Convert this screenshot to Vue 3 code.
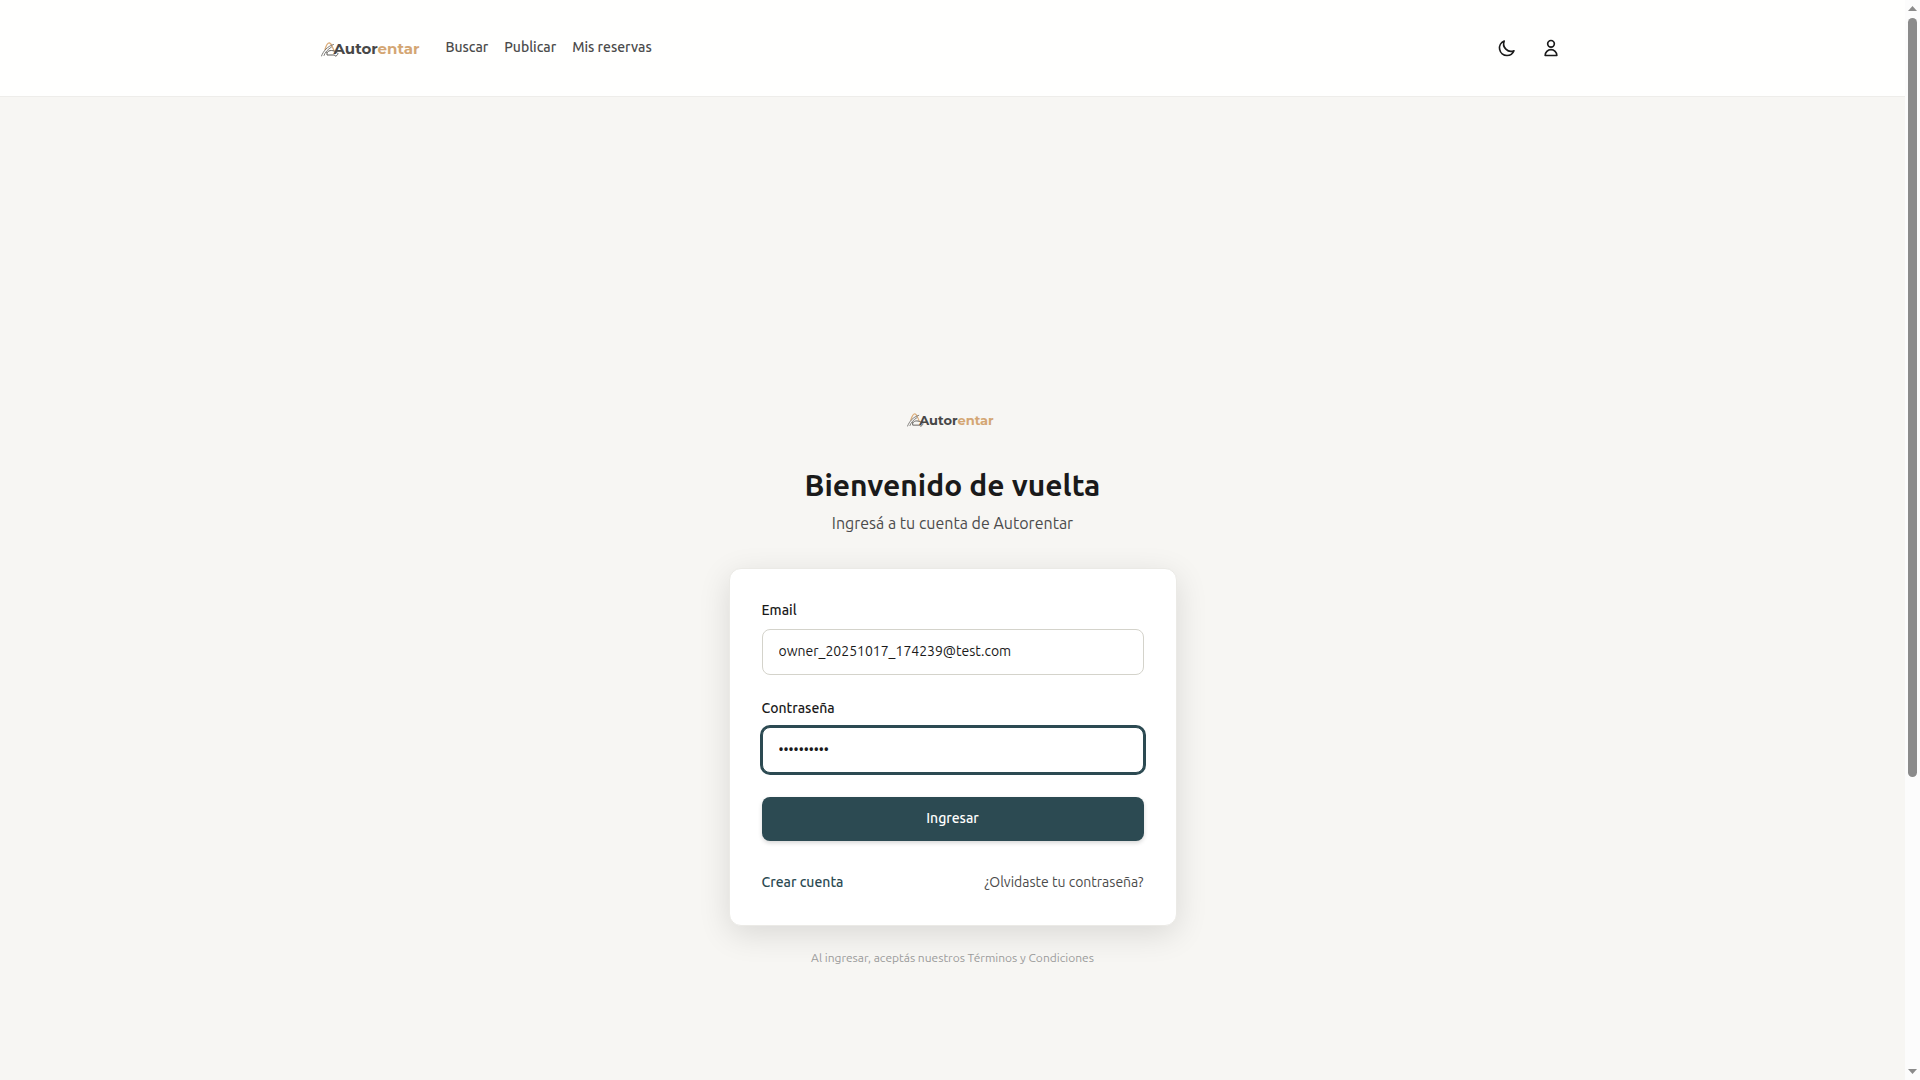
<script setup>
import { ref } from 'vue'

const email = ref('owner_20251017_174239@test.com')
const password = ref('autos12345')
const links = ['Buscar', 'Publicar', 'Mis reservas']
</script>

<template>
  <div class="window">
    <div class="page">
      <header class="header">
        <div class="header-inner">
          <a class="logo large" href="#" aria-label="Autorentar">
            <svg class="mark" viewBox="0 0 36 30" fill="none" stroke-linecap="round" aria-hidden="true">
              <path d="M8 15C11 5 13 1 17 2C21 3 22 9 26 17" stroke="#dcae7c" stroke-width="2.600" />
              <path d="M1 28C5 18 12 9 25 5M6 27C8 21 13 15 21 10" stroke="#5c5a57" stroke-width="1.600" />
              <path d="M12 21C16 15 25 16 32 21M12 21V26H27C28 30 33 28 34 23" stroke="#5c5a57" stroke-width="2" />
            </svg>
            <span class="word">Autor<span class="accent">entar</span></span>
          </a>
          <nav class="nav">
            <a v-for="link in links" :key="link" href="#">{{ link }}</a>
          </nav>
          <div class="actions">
            <button type="button" class="icon-button" aria-label="Cambiar tema">
              <svg viewBox="0 0 24 24" class="icon"><path d="M20.354 15.354A9 9 0 018.646 3.646 9.003 9.003 0 0012 21a9.003 9.003 0 008.354-5.646z" /></svg>
            </button>
            <button type="button" class="icon-button" aria-label="Perfil">
              <svg viewBox="0 0 24 24" class="icon"><path d="M16 7a4 4 0 11-8 0 4 4 0 018 0zM12 14a7 7 0 00-7 7h14a7 7 0 00-7-7z" /></svg>
            </button>
          </div>
        </div>
      </header>

      <main class="main">
        <div class="login">
          <div class="logo small">
            <svg class="mark" viewBox="0 0 36 30" fill="none" stroke-linecap="round" aria-hidden="true">
              <path d="M8 15C11 5 13 1 17 2C21 3 22 9 26 17" stroke="#dcae7c" stroke-width="2.600" />
              <path d="M1 28C5 18 12 9 25 5M6 27C8 21 13 15 21 10" stroke="#5c5a57" stroke-width="1.600" />
              <path d="M12 21C16 15 25 16 32 21M12 21V26H27C28 30 33 28 34 23" stroke="#5c5a57" stroke-width="2" />
            </svg>
            <span class="word">Autor<span class="accent">entar</span></span>
          </div>
          <h1>Bienvenido de vuelta</h1>
          <p class="subtitle">Ingresá a tu cuenta de Autorentar</p>

          <form class="card" @submit.prevent>
            <div class="field">
              <label for="email">Email</label>
              <input id="email" v-model="email" type="email" autocomplete="off" />
            </div>
            <div class="field">
              <label for="password">Contraseña</label>
              <input id="password" v-model="password" class="focused" type="password" autocomplete="off" />
            </div>
            <button type="submit" class="submit">Ingresar</button>
            <div class="card-links">
              <a href="#" class="create">Crear cuenta</a>
              <a href="#" class="forgot">¿Olvidaste tu contraseña?</a>
            </div>
          </form>

          <p class="terms">Al ingresar, aceptás nuestros Términos y Condiciones</p>
        </div>
      </main>
    </div>

    <div class="scrollbar" aria-hidden="true">
      <svg class="arrow" viewBox="0 0 9 5"><path d="M4.500 0L9 5H0z" /></svg>
      <div class="track"><div class="thumb"></div></div>
      <svg class="arrow" viewBox="0 0 9 5"><path d="M0 0H9L4.500 5z" /></svg>
    </div>
  </div>
</template>

<style>
body {
  margin: 0;
  background: #f7f6f3;
}
</style>

<style scoped>
* {
  box-sizing: border-box;
}
.window {
  display: flex;
  height: 100vh;
  overflow: hidden;
  font-family: Ubuntu, "Noto Sans", "Open Sans", sans-serif;
  font-size: 14px;
  line-height: 20px;
  color: #1a1a1a;
}
.page {
  flex: 1;
  min-width: 0;
  background: #f7f6f3;
}
a {
  text-decoration: none;
}
.header {
  background: #fffffe;
  border-bottom: 1px solid #eeedea;
}
.header-inner {
  display: flex;
  align-items: center;
  max-width: 1280px;
  height: 96px;
  margin: 0 auto;
  padding: 0 22px 0 8px;
}
.logo {
  display: flex;
  align-items: center;
  font-family: Montserrat, Inter, sans-serif;
  font-weight: 700;
  color: #474747;
}
.large {
  padding-top: 2px;
  font-size: 15px;
}
.mark {
  width: 18px;
  height: 15px;
  margin-right: -5px;
}
.accent {
  color: #d4a673;
}
.nav {
  display: flex;
  gap: 16px;
  margin-left: 26px;
  padding-bottom: 2px;
}
.nav a {
  font-weight: 500;
  color: #4b4b4b;
}
.actions {
  display: flex;
  gap: 4px;
  margin-left: auto;
}
.icon-button {
  display: flex;
  align-items: center;
  justify-content: center;
  width: 40px;
  height: 40px;
  padding: 0;
  border: 0;
  background: none;
}
.icon {
  width: 20px;
  height: 20px;
  fill: none;
  stroke: #1a1a1a;
  stroke-width: 2;
  stroke-linecap: round;
  stroke-linejoin: round;
}
.main {
  display: flex;
  justify-content: center;
  padding: 304px 16px 0;
}
.login {
  display: flex;
  flex-direction: column;
  align-items: center;
  width: 100%;
  max-width: 448px;
}
.small {
  height: 40px;
  margin-bottom: 26px;
  padding: 0 4px 2px 0;
  font-size: 13px;
}
.small .mark {
  width: 17px;
  height: 14px;
}
h1 {
  margin: 0 0 8px;
  font-size: 30px;
  font-weight: 600;
  line-height: 36px;
}
.subtitle {
  margin: 0 0 33px;
  font-size: 16px;
  line-height: 24px;
  color: #4b4b4b;
}
.card {
  width: 100%;
  display: flex;
  flex-direction: column;
  gap: 24px;
  padding: 32px;
  border: 1px solid #ebeae6;
  border-radius: 12px;
  background: #fff;
  box-shadow: 0 8px 32px rgba(0, 0, 0, 0.12);
}
.field {
  display: flex;
  flex-direction: column;
  gap: 10px;
}
label {
  font-weight: 500;
  line-height: 18px;
}
input {
  width: 100%;
  height: 46px;
  padding: 0 16px 2px;
  border: 1px solid #d4d3cb;
  border-radius: 8px;
  outline: none;
  background: #fff;
  font: inherit;
  color: #1a1a1a;
}
.focused {
  border-color: #2c4a52;
  box-shadow: 0 0 0 2px #2c4a52;
}
.submit {
  height: 44px;
  padding: 0 16px 2px;
  border: 0;
  border-radius: 8px;
  background: #2c4a52;
  box-shadow: 0 2px 4px rgba(0, 0, 0, 0.16);
  font: inherit;
  font-weight: 500;
  color: #fffffe;
}
.card-links {
  display: flex;
  justify-content: space-between;
  padding: 7px 0 1px;
}
.create {
  font-weight: 500;
  color: #2c4a52;
}
.forgot {
  color: #4b4b4b;
}
.terms {
  margin: 24px 0 0;
  font-size: 12px;
  line-height: 16px;
  color: #9b9b9b;
}
.scrollbar {
  display: flex;
  flex-direction: column;
  align-items: center;
  width: 15px;
  padding: 6px 0;
  background: #fcfcfc;
}
.arrow {
  width: 9px;
  height: 5px;
  fill: #8b8b8b;
}
.track {
  flex: 1;
  margin: 7px 0;
}
.thumb {
  width: 9px;
  height: 72.700%;
  border-radius: 5px;
  background: #8b8b8b;
}
</style>
